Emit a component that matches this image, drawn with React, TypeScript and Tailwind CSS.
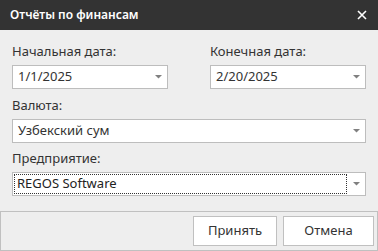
import React from "react";

function Arrow() {
  return (
    <svg width="7" height="4" viewBox="0 0 7 4" className="block">
      <polygon points="0,0 7,0 3.5,3.5" fill="#808080" />
    </svg>
  );
}

function Select({ value, focused }: { value: string; focused?: boolean }) {
  return (
    <div className="h-[24px] bg-white border border-[#bdbdbd] flex items-stretch">
      {focused ? (
        <div className="flex-1 m-[1px] border border-dotted border-[#333333] flex items-center pl-[2px] text-[13px] text-[#222222]">
          {value}
        </div>
      ) : (
        <div className="flex-1 flex items-center pl-[5px] text-[13px] text-[#333333]">{value}</div>
      )}
      <div className="w-[17px] flex items-center justify-center pr-[1px]">
        <Arrow />
      </div>
    </div>
  );
}

export default function App() {
  return (
    <div
      className="w-[378px] h-[251px] bg-[#eeeeee] flex flex-col overflow-hidden"
      style={{ fontFamily: '"Noto Sans", "Open Sans", sans-serif' }}
    >
      <div className="h-[30px] bg-[#333333] flex items-center justify-between pl-[10px] pr-[11px] shrink-0">
        <span className="text-white text-[12px] font-semibold">Отчёты по финансам</span>
        <svg width="10" height="10" viewBox="0 0 10 10">
          <path d="M1 1 L9 9 M9 1 L1 9" stroke="#ffffff" strokeWidth="1.6" />
        </svg>
      </div>
      <div className="flex-1 px-[12px] pt-[12px] text-[#333333]">
        <div className="grid grid-cols-2 gap-x-[42px]">
          <div>
            <div className="text-[13px] leading-[18px] mb-[5px]">Начальная дата:</div>
            <Select value="1/1/2025" />
          </div>
          <div>
            <div className="text-[13px] leading-[18px] mb-[5px]">Конечная дата:</div>
            <Select value="2/20/2025" />
          </div>
        </div>
        <div className="mt-[7px]">
          <div className="text-[13px] leading-[18px] mb-[5px]">Валюта:</div>
          <Select value="Узбекский сум" />
        </div>
        <div className="mt-[6px]">
          <div className="text-[13px] leading-[18px] mb-[5px]">Предприятие:</div>
          <Select value="REGOS Software" focused />
        </div>
      </div>
      <div className="h-[40px] shrink-0 border border-[#c0c0c0] flex items-start justify-end gap-[6px] pt-[4px] pr-[3px]">
        <button className="w-[84px] h-[30px] bg-white border border-[#c0c0c0] text-[13px] text-[#333333]">
          Принять
        </button>
        <button className="w-[91px] h-[30px] bg-white border border-[#c0c0c0] text-[13px] text-[#333333]">
          Отмена
        </button>
      </div>
    </div>
  );
}
